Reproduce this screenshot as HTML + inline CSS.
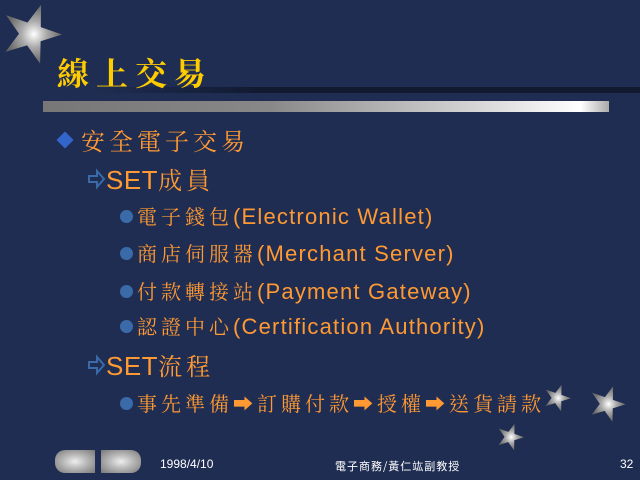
<!DOCTYPE html>
<html><head><meta charset="utf-8"><style>
body{margin:0;width:640px;height:480px;background:#1f2d52;overflow:hidden;position:relative;font-family:"Liberation Sans","Noto Serif CJK TC","Noto Sans CJK TC",sans-serif}
.a{position:absolute;white-space:nowrap}
.o{color:#ff9933}
.cj{font-family:"Noto Serif CJK TC","Noto Sans CJK TC",serif;letter-spacing:4px}
.la{font-family:"Liberation Sans",sans-serif;font-size:22px;letter-spacing:1.2px}
.dot{position:absolute;width:13px;height:13px;border-radius:50%;background:#3a6aa8}
.btn{position:absolute;top:450px;height:23px;width:40px;background:radial-gradient(ellipse at center,#eee 0%,#bbb 40%,#777 100%)}
.ar{position:absolute;font-size:26px;color:#3a6aa8;line-height:28px;font-family:"DejaVu Sans",sans-serif}
</style></head><body>
<svg class="a" style="left:0;top:0" width="640" height="480">
<defs>
<radialGradient id="g"><stop offset="0" stop-color="#fff"/><stop offset="0.45" stop-color="#aaa"/><stop offset="1" stop-color="#666"/></radialGradient>
<linearGradient id="bar" x1="0" x2="1"><stop offset="0" stop-color="#777"/><stop offset="0.4" stop-color="#888"/><stop offset="0.8" stop-color="#ddd"/><stop offset="0.95" stop-color="#fff"/><stop offset="1" stop-color="#aaa"/></linearGradient>
<linearGradient id="sh" x1="0" x2="1"><stop offset="0" stop-color="#1f2d52"/><stop offset="0.3" stop-color="#111a30"/><stop offset="1" stop-color="#111a30"/></linearGradient>
<polygon id="st" points="10.1,-29.3 9.8,-6.9 31,0.5 9.6,7.2 9.1,29.6 -3.9,11.4 -25.4,17.8 -12,-0.2 -24.8,-18.7 -3.5,-11.5" fill="url(#g)"/>
</defs>
<rect x="95" y="87" width="545" height="6" fill="url(#sh)"/>
<rect x="43" y="101" width="566" height="11" fill="url(#bar)"/>
<use href="#st" transform="translate(31,34)"/>
<use href="#st" transform="translate(557,398) scale(0.45)"/>
<use href="#st" transform="translate(607,404) scale(0.6)"/>
<use href="#st" transform="translate(510,437) scale(0.45)"/>
<rect x="59" y="134" width="12" height="12" fill="#3366cc" transform="rotate(45 65 140)"/>
<path d="M89,176 h8 v-5 l7,8 l-7,8 v-5 h-8 z" fill="none" stroke="#3a6aa8" stroke-width="2"/>
<path d="M89,362 h8 v-5 l7,8 l-7,8 v-5 h-8 z" fill="none" stroke="#3a6aa8" stroke-width="2"/>
</svg>
<div class="a cj" style="left:57px;top:52px;font-size:32px;color:#ffcc00;letter-spacing:7px;line-height:40px;font-weight:bold">線上交易</div>
<div class="a o cj" style="left:81px;top:124px;font-size:24px;letter-spacing:4px;line-height:32px">安全電子交易</div>
<div class="a o" style="left:106px;top:163px;font-size:24px;line-height:32px"><span class="la" style="font-size:26px;letter-spacing:0.5px">SET</span><span class="cj">成員</span></div>
<div class="dot" style="left:120px;top:210px"></div>
<div class="a o" style="left:137px;top:202px;font-size:20px;line-height:28px"><span class="cj">電子錢包</span><span class="la">(Electronic Wallet)</span></div>
<div class="dot" style="left:120px;top:247px"></div>
<div class="a o" style="left:137px;top:239px;font-size:20px;line-height:28px"><span class="cj">商店伺服器</span><span class="la">(Merchant Server)</span></div>
<div class="dot" style="left:120px;top:285px"></div>
<div class="a o" style="left:137px;top:277px;font-size:20px;line-height:28px"><span class="cj">付款轉接站</span><span class="la">(Payment Gateway)</span></div>
<div class="dot" style="left:120px;top:320px"></div>
<div class="a o" style="left:137px;top:312px;font-size:20px;line-height:28px"><span class="cj">認證中心</span><span class="la">(Certification Authority)</span></div>
<div class="a o" style="left:106px;top:349px;font-size:24px;line-height:32px"><span class="la" style="font-size:26px;letter-spacing:0.5px">SET</span><span class="cj">流程</span></div>
<div class="dot" style="left:120px;top:397px"></div>
<div class="a o cj" style="left:137px;top:389px;font-size:20px;line-height:28px;letter-spacing:4px">事先準備➡訂購付款➡授權➡送貨請款</div>
<div class="btn" style="left:55px;border-radius:10px 0 0 10px"></div>
<div class="btn" style="left:101px;border-radius:0 10px 10px 0"></div>
<div class="a" style="left:160px;top:457px;font-size:12px;color:#fff;line-height:14px">1998/4/10</div>
<div class="a" style="left:335px;top:459px;font-size:11px;color:#fff;line-height:14px;font-family:'Noto Sans CJK TC',sans-serif;letter-spacing:1px">電子商務/黃仁竑副教授</div>
<div class="a" style="left:620px;top:457px;font-size:12px;color:#fff;line-height:14px">32</div>
</body></html>
